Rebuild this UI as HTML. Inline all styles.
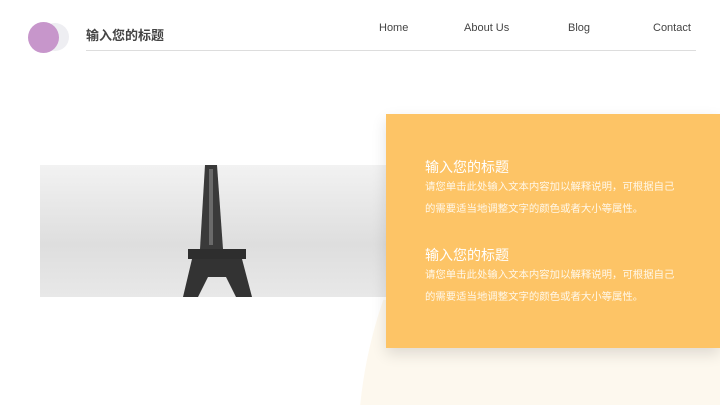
<!DOCTYPE html>
<html><head><meta charset="utf-8"><style>
*{margin:0;padding:0;box-sizing:border-box}
html,body{width:720px;height:405px;overflow:hidden}
body{background:#fff;position:relative;font-family:"Liberation Sans","Noto Sans CJK SC",sans-serif}
.a{position:absolute}
.nav{font-size:11px;color:#444;top:22px}
.card{left:386px;top:114px;width:334px;height:234px;background:#fdc466;box-shadow:0 6px 14px rgba(0,0,0,0.12)}
.h{font-size:14px;color:#fff;left:39px}
.p{font-size:10.4px;color:#fff8ea;left:39px;line-height:22px;width:255px}
</style></head><body>
<div class="a" style="left:0;top:300px;width:720px;height:105px;overflow:hidden"><div class="a" style="left:358px;top:-308px;width:916px;height:916px;border-radius:50%;background:#fdf8ee"></div></div>
<div class="a" style="left:41px;top:23px;width:28px;height:28px;border-radius:50%;background:#eeeef2"></div>
<div class="a" style="left:28px;top:22px;width:31px;height:31px;border-radius:50%;background:#c796cb"></div>
<div class="a" style="left:86px;top:25px;font-size:13px;font-weight:bold;color:#444">输入您的标题</div>
<div class="a" style="left:86px;top:50px;width:610px;height:1px;background:#ddd"></div>
<div class="a nav" style="left:379px">Home</div>
<div class="a nav" style="left:464px">About Us</div>
<div class="a nav" style="left:568px">Blog</div>
<div class="a nav" style="left:653px">Contact</div>
<svg class="a" style="left:40px;top:165px" width="346" height="132" viewBox="0 0 346 132">
<defs><linearGradient id="g" x1="0" y1="0" x2="0" y2="1"><stop offset="0" stop-color="#f2f2f2"/><stop offset="0.6" stop-color="#dedede"/><stop offset="1" stop-color="#e8e8e8"/></linearGradient></defs>
<rect width="346" height="132" fill="url(#g)"/>
<path d="M165 0H177L183 84H160Z" fill="#3a3a3a"/>
<path d="M169 4h4v76h-4z" fill="#9a9a9a" opacity=".5"/>
<rect x="148" y="84" width="58" height="10" fill="#2e2e2e"/>
<path d="M152 94H202L212 132H196L186 112H168L158 132H143Z" fill="#333"/>
</svg>
<div class="a card">
<div class="a h" style="top:43px">输入您的标题</div>
<div class="a p" style="top:63px">请您单击此处输入文本内容加以解释说明，可根据自己的需要适当地调整文字的颜色或者大小等属性。</div>
<div class="a h" style="top:131px">输入您的标题</div>
<div class="a p" style="top:151px">请您单击此处输入文本内容加以解释说明，可根据自己的需要适当地调整文字的颜色或者大小等属性。</div>
</div>
</body></html>
